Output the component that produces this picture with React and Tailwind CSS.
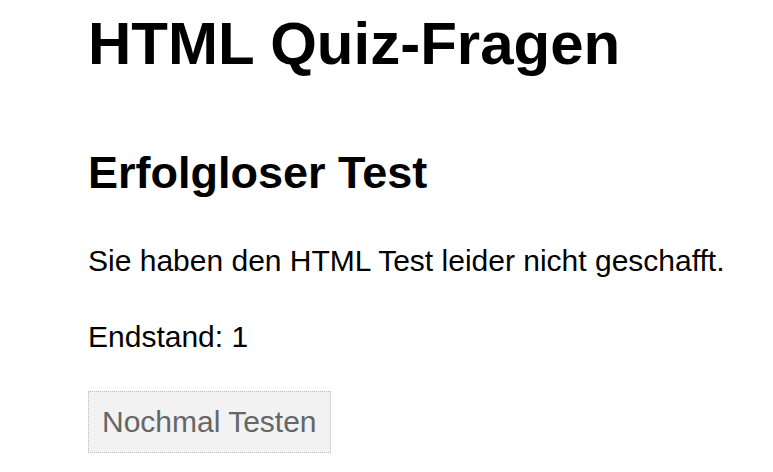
export default function App() {
  return (
    <div className="min-h-screen bg-white pl-[88px] pt-[9px] text-black" style={{ fontFamily: '"Liberation Sans", Arial, sans-serif' }}>
      <h1 className="text-[60px] font-bold leading-[69px]">HTML Quiz-Fragen</h1>
      <h2 className="mt-[69px] text-[45px] font-bold leading-[52px]">Erfolgloser Test</h2>
      <p className="mt-[45px] text-[30px] leading-[34px]">Sie haben den HTML Test leider nicht geschafft.</p>
      <p className="mt-[42px] text-[30px] leading-[34px]">Endstand: 1</p>
      <button className="mt-[37px] border border-dotted border-[#bbbbbb] bg-[#f2f2f2] px-[13px] py-[13px] text-[30px] leading-[34px] text-[#666666]">
        Nochmal Testen
      </button>
    </div>
  );
}
